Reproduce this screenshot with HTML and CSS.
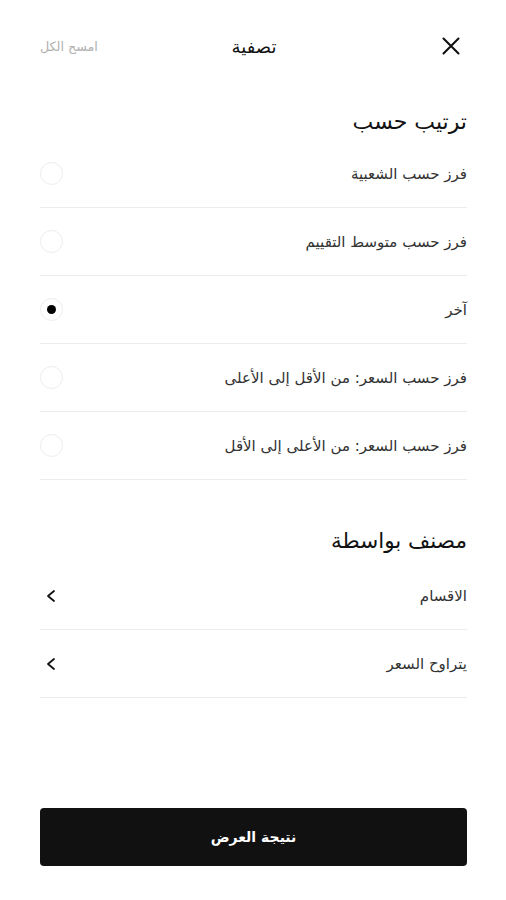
FILE: index.html
```html
<!DOCTYPE html>
<html lang="ar" dir="rtl">
<head>
<meta charset="utf-8">
<link rel="stylesheet" href="styles.css">
</head>
<body>
<div class="page">
  <header class="header">
    <button class="close" aria-label="close">
      <svg width="18" height="18" viewBox="0 0 18 18"><path d="M1.5 1.5 L16.5 16.5 M16.5 1.5 L1.5 16.5" stroke="#111" stroke-width="2.1" fill="none" stroke-linecap="round"/></svg>
    </button>
    <div class="title">تصفية</div>
    <div class="clear">امسح الكل</div>
  </header>

  <section class="section">
    <h2 class="heading">ترتيب حسب</h2>
    <div class="row"><span class="label">فرز حسب الشعبية</span><span class="radio"></span></div>
    <div class="row"><span class="label">فرز حسب متوسط التقييم</span><span class="radio"></span></div>
    <div class="row"><span class="label">آخر</span><span class="radio checked"></span></div>
    <div class="row"><span class="label">فرز حسب السعر: من الأقل إلى الأعلى</span><span class="radio"></span></div>
    <div class="row"><span class="label">فرز حسب السعر: من الأعلى إلى الأقل</span><span class="radio"></span></div>
  </section>

  <section class="section second">
    <h2 class="heading">مصنف بواسطة</h2>
    <div class="row"><span class="label">الاقسام</span>
      <svg class="chev" width="12" height="14" viewBox="0 0 12 14"><path d="M9 2 L3 7 L9 12" stroke="#111" stroke-width="1.8" fill="none" stroke-linecap="round" stroke-linejoin="round"/></svg>
    </div>
    <div class="row"><span class="label">يتراوح السعر</span>
      <svg class="chev" width="12" height="14" viewBox="0 0 12 14"><path d="M9 2 L3 7 L9 12" stroke="#111" stroke-width="1.8" fill="none" stroke-linecap="round" stroke-linejoin="round"/></svg>
    </div>
  </section>

  <footer class="footer">
    <button class="apply">نتيجة العرض</button>
  </footer>
</div>
</body>
</html>
```

FILE: styles.css
```css
* { box-sizing: border-box; }
html, body { margin: 0; padding: 0; background: #fff; }
body {
  font-family: "DejaVu Sans", "Noto Sans", sans-serif;
  color: #222;
}
.page {
  min-height: 900px;
  display: flex;
  flex-direction: column;
}
.header {
  height: 92px;
  display: grid;
  grid-template-columns: 1fr auto 1fr;
  align-items: center;
  padding: 0 46px 0 40px;
}
.close {
  justify-self: start;
  background: none;
  border: 0;
  padding: 0;
  width: 18px;
  height: 18px;
  display: flex;
}
.title {
  font-size: 18px;
  color: #111;
  margin-left: 8px;
}
.clear {
  justify-self: end;
  font-size: 12.7px;
  color: #b0b0b0;
}
.section {
  padding: 0 39px 0 40px;
}
.heading {
  margin: 0;
  height: 48px;
  padding-top: 17px;
  font-size: 22px;
  font-weight: normal;
  color: #111;
  line-height: 26px;
}
.second { margin-top: 45px; }
.second .heading { height: 37px; padding-top: 3px; font-size: 21.5px; }
.row {
  height: 68px;
  border-bottom: 1px solid #ececec;
  display: flex;
  align-items: center;
  justify-content: space-between;
}
.label {
  font-size: 15px;
  color: #333;
}
.radio {
  width: 23px;
  height: 23px;
  border-radius: 50%;
  border: 1.5px solid #ededed;
  display: flex;
  align-items: center;
  justify-content: center;
}
.radio.checked::after {
  content: "";
  width: 9px;
  height: 9px;
  border-radius: 50%;
  background: #000;
}
.chev { margin-left: 5px; }
.footer {
  margin-top: auto;
  padding: 0 39px 34px 40px;
}
.apply {
  width: 100%;
  height: 58px;
  background: #111;
  color: #fff;
  border: 0;
  border-radius: 4px;
  font-family: "DejaVu Sans", sans-serif;
  font-size: 14px;
  font-weight: bold;
}
```
